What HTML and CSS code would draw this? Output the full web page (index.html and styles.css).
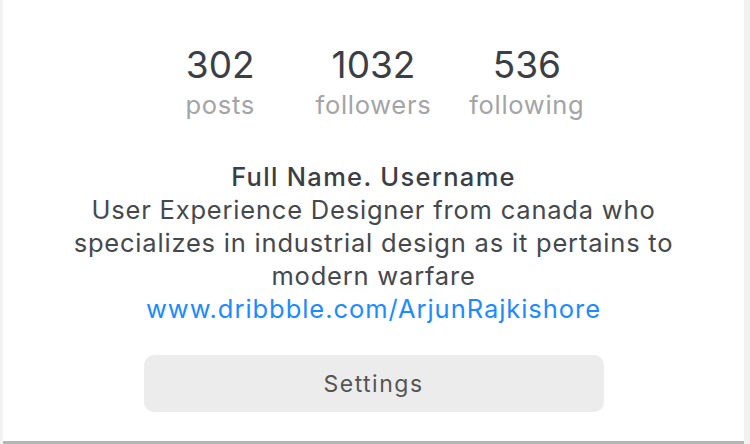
FILE: index.html
```html
<!DOCTYPE html>
<html>
<head>
<meta charset="utf-8">
<link rel="stylesheet" href="styles.css">
</head>
<body>
<div class="frame">
  <div class="profile">
    <div class="stats">
      <div class="stat"><div class="num">302</div><div class="label">posts</div></div>
      <div class="stat"><div class="num">1032</div><div class="label">followers</div></div>
      <div class="stat"><div class="num">536</div><div class="label">following</div></div>
    </div>
    <div class="bio">
      <div class="name">Full Name. Username</div>
      <div class="desc">User Experience Designer from canada who<br>specializes in industrial design as it pertains to<br>modern warfare</div>
      <a class="link" href="#">www.dribbble.com/ArjunRajkishore</a>
    </div>
    <button class="settings">Settings</button>
  </div>
</div>
</body>
</html>
```

FILE: styles.css
```css
html, body {
  margin: 0;
  padding: 0;
  background: #f2f2f2;
}
body {
  width: 750px;
  height: 444px;
  font-family: Inter, "Noto Sans", sans-serif;
}
.frame {
  margin-left: 3px;
  width: 741px;
  height: 441px;
  background: #ffffff;
  border-bottom: 3px solid #b5b5b5;
}
.profile {
  display: flex;
  flex-direction: column;
  align-items: center;
  padding-top: 44px;
}
.stats {
  display: grid;
  grid-template-columns: repeat(3, 1fr);
  width: 460px;
}
.stat {
  display: flex;
  flex-direction: column;
  align-items: center;
}
.num {
  font-size: 37px;
  line-height: 42px;
  color: #3b3f45;
}
.label {
  margin-top: 4px;
  font-size: 25.5px;
  line-height: 30px;
  letter-spacing: 0.7px;
  color: #a3a4a8;
}
.bio {
  margin-top: 40px;
  display: flex;
  flex-direction: column;
  align-items: center;
  text-align: center;
}
.name {
  font-size: 25.5px;
  line-height: 33px;
  font-weight: 500;
  letter-spacing: 1.3px;
  color: #3b3f45;
}
.desc {
  font-size: 25.5px;
  line-height: 33px;
  letter-spacing: 0.8px;
  color: #45484d;
}
.link {
  font-size: 25.5px;
  line-height: 33px;
  letter-spacing: 0.95px;
  color: #1a8cff;
  text-decoration: none;
}
.settings {
  margin-top: 30px;
  width: 460px;
  height: 57px;
  border: none;
  border-radius: 10px;
  background: #ececed;
  font-family: inherit;
  font-size: 23px;
  color: #555;
  letter-spacing: 1.5px;
  padding: 0;
}
```
